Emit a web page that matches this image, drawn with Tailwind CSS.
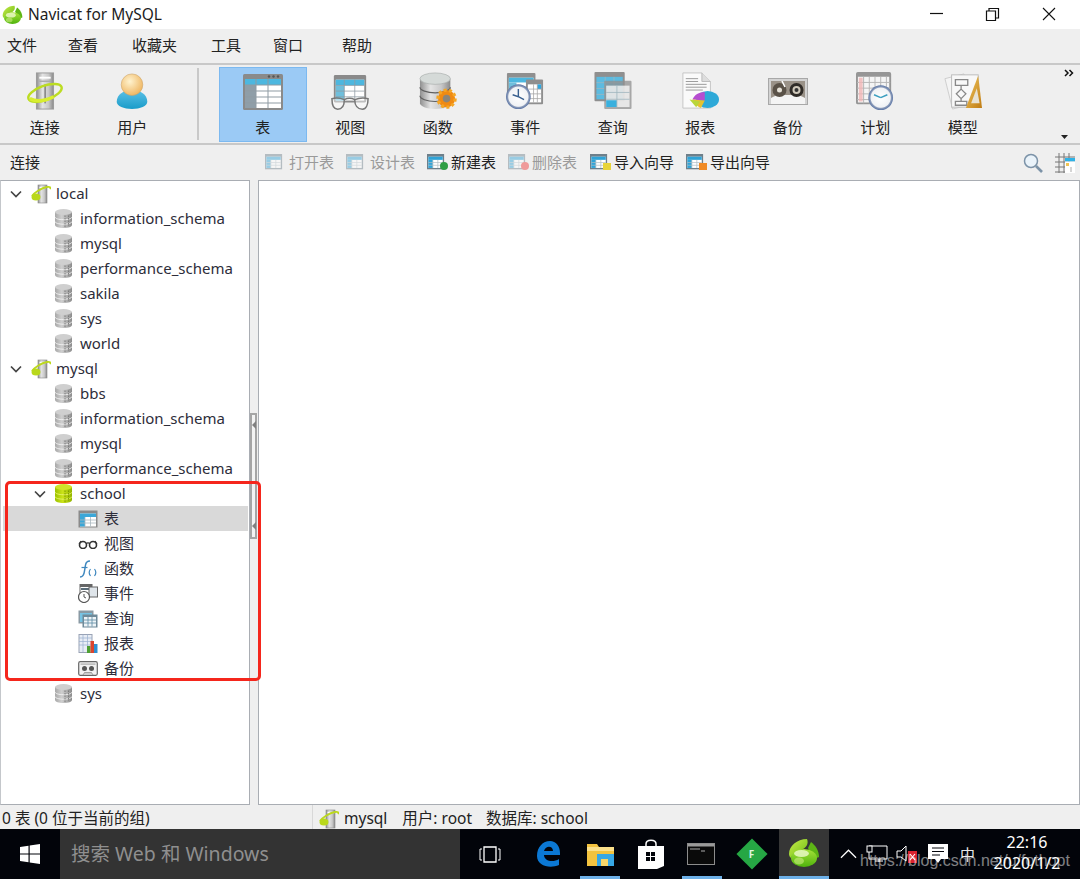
<!DOCTYPE html>
<html lang="zh">
<head>
<meta charset="utf-8">
<title>Navicat for MySQL</title>
<script src="https://cdn.jsdelivr.net/npm/@tailwindcss/browser@4"></script>
</head>
<body class="m-0">
<svg width="0" height="0" class="absolute">
  <defs>
    <linearGradient id="gMetal" x1="0" x2="1" y1="0" y2="0"><stop offset="0" stop-color="#8f8f8f"/><stop offset=".35" stop-color="#e4e4e4"/><stop offset=".7" stop-color="#c9c9c9"/><stop offset="1" stop-color="#8a8a8a"/></linearGradient>
    <linearGradient id="gDb" x1="0" x2="1" y1="0" y2="0"><stop offset="0" stop-color="#a8a8a8"/><stop offset=".4" stop-color="#cfcfcf"/><stop offset="1" stop-color="#8c8c8c"/></linearGradient>
    <linearGradient id="gBlue" x1="0" x2="0" y1="0" y2="1"><stop offset="0" stop-color="#5bc0e6"/><stop offset="1" stop-color="#1a9cc9"/></linearGradient>
    <linearGradient id="gLeaf" x1="0" x2="1" y1="0" y2="1"><stop offset="0" stop-color="#c9ec4a"/><stop offset="1" stop-color="#6cbc14"/></linearGradient>
    <linearGradient id="gBlob" x1="0" x2="0" y1="0" y2="1"><stop offset="0" stop-color="#a6e23a"/><stop offset="1" stop-color="#4fb30c"/></linearGradient>
    <linearGradient id="gLime" x1="0" x2="1" y1="0" y2="0"><stop offset="0" stop-color="#9cc200"/><stop offset=".45" stop-color="#cbe31a"/><stop offset="1" stop-color="#92b400"/></linearGradient>
    <radialGradient id="gFace" cx=".4" cy=".35" r=".7"><stop offset="0" stop-color="#fff3cf"/><stop offset="1" stop-color="#eeb35c"/></radialGradient>
    <radialGradient id="gClock" cx=".5" cy=".5" r=".5"><stop offset="0" stop-color="#fff"/><stop offset=".78" stop-color="#f0f2f5"/><stop offset=".86" stop-color="#8c9cba"/><stop offset="1" stop-color="#5b75a5"/></radialGradient>
    <linearGradient id="gGold" x1="0" x2="1" y1="0" y2="1"><stop offset="0" stop-color="#f0c860"/><stop offset="1" stop-color="#c07c14"/></linearGradient>

    <symbol id="logo" viewBox="0 0 32 29">
      <path d="M1 16C1 8 9 1 19 1c2 5-1 9-6 11-4 1.500-8 3-10 8-1-1-2-2-2-4z" fill="url(#gLeaf)"/>
      <path d="M23 4c4 3 8 8 8 15-1 1-3 1-5 0-3-3-5-6-6-9z" fill="#5db515"/>
      <ellipse cx="16" cy="20" rx="13" ry="9" fill="url(#gBlob)"/>
      <ellipse cx="13.500" cy="15.500" rx="7.500" ry="3.500" fill="#e9f8c4" opacity=".85"/>
      <ellipse cx="11" cy="23" rx="5" ry="3.500" fill="#d4f08a" opacity=".55"/>
    </symbol>
    <symbol id="conn" viewBox="0 0 40 40">
      <rect x="11" y="1" width="18" height="38" fill="url(#gMetal)" stroke="#9a9a9a"/>
      <rect x="14" y="5" width="12" height="2" fill="#fff"/><rect x="14" y="9" width="12" height="1.500" fill="#aaa"/>
      <rect x="19.500" y="13" width="1.200" height="20" fill="#666"/>
      <ellipse cx="20" cy="22" rx="18.500" ry="7.500" transform="rotate(-20 20 22)" fill="none" stroke="#bcdc22" stroke-width="2.600"/>
      <path d="M4 28c8 4 17 2 25-2" fill="none" stroke="#d9ee30" stroke-width="3.600"/>
    </symbol>
    <symbol id="user" viewBox="0 0 40 40">
      <path d="M3 32c0-8 8-13 17-13s17 5 17 13c0 5-8 8-17 8S3 37 3 32z" fill="url(#gBlue)"/>
      <circle cx="20" cy="13" r="12" fill="url(#gFace)" stroke="#c9a268" stroke-width=".6"/>
    </symbol>
    <symbol id="tbl" viewBox="0 0 40 36">
      <rect x="0" y="0" width="40" height="36" rx="1.500" fill="#8a8a8a"/>
      <rect x="2" y="5" width="36" height="29" fill="#fff"/>
      <rect x="2" y="5" width="36" height="6" fill="#4db7df"/>
      <rect x="2" y="11" width="11" height="23" fill="#8f9ea8"/>
      <path d="M2 11h36M2 17h36M2 23h36M2 29h36M13 5v29M25 5v29" stroke="#8f9ba3" stroke-width="1"/>
      <circle cx="26" cy="2.500" r="1.200" fill="#555"/><circle cx="30.500" cy="2.500" r="1.200" fill="#555"/><circle cx="35" cy="2.500" r="1.200" fill="#555"/>
    </symbol>
    <symbol id="view" viewBox="0 0 40 40">
      <rect x="3" y="1" width="34" height="29" rx="1.500" fill="#8a8a8a"/>
      <rect x="5" y="6" width="30" height="22" fill="#fff"/>
      <rect x="5" y="6" width="30" height="6" fill="#4db7df"/><rect x="5" y="12" width="9" height="16" fill="#6fbfdc"/>
      <path d="M5 12h30M5 18h30M5 24h30M14 6v22M25 6v22" stroke="#8f9ba3" stroke-width=".8"/>
      <path d="M1 26c4-1 8-1 13 1 0 6-2 10-7 10-5 0-6-6-6-11zM39 26c-4-1-9-1-14 1 0 6 3 10 8 10 4 0 6-5 6-11zM14 27c3-1.500 8-1.500 11 0" fill="#fff" fill-opacity=".45" stroke="#777" stroke-width="1.600"/>
    </symbol>
    <symbol id="func" viewBox="0 0 40 40">
      <path d="M1 7v26c0 3 7 6 16 6s16-3 16-6V7z" fill="url(#gMetal)"/>
      <ellipse cx="17" cy="7" rx="16" ry="6" fill="#d5dad8" stroke="#a0a5a3" stroke-width=".6"/>
      <path d="M1 16c0 3 7 6 16 6s16-3 16-6M1 25c0 3 7 6 16 6s16-3 16-6" fill="none" stroke="#606060" stroke-width="1.200"/>
      <circle cx="29" cy="28" r="9" fill="#f08a12"/>
      <circle cx="29" cy="28" r="9" fill="none" stroke="#f5a623" stroke-width="3.500" stroke-dasharray="3 2.600"/>
      <circle cx="29" cy="28" r="4" fill="#8c8578"/>
    </symbol>
    <symbol id="event" viewBox="0 0 40 40">
      <rect x="1" y="1" width="30" height="26" rx="1" fill="#8f8f8f"/><rect x="3" y="6" width="26" height="19" fill="#fff"/><rect x="3" y="6" width="26" height="5" fill="#4db7df"/>
      <rect x="3" y="11" width="8" height="14" fill="#6fbfdc"/>
      <rect x="21" y="8" width="18" height="26" rx="1" fill="#8f8f8f"/><rect x="23" y="13" width="14" height="19" fill="#fff"/><rect x="33" y="13" width="4" height="5" fill="#2fa7e0"/>
      <path d="M23 18h14M23 23h14M23 28h14M29 13v19M33 13v19" stroke="#a4a4a4" stroke-width=".8"/>
      <circle cx="13" cy="26" r="13" fill="url(#gClock)"/>
      <path d="M13 18v8l-6-2M13 26l6 3" fill="none" stroke="#39608f" stroke-width="1.500"/>
    </symbol>
    <symbol id="query" viewBox="0 0 40 40">
      <rect x="1" y="1" width="31" height="30" rx="1" fill="#8f8f8f"/><rect x="3" y="6" width="27" height="23" fill="#5cbbe0"/>
      <path d="M3 12h27M3 18h27M3 24h27M12 6v23M21 6v23" stroke="#9fb4bd" stroke-width=".8"/>
      <rect x="11" y="10" width="28" height="29" rx="1" fill="#8f8f8f" fill-opacity=".75"/><rect x="13" y="15" width="24" height="22" fill="#fff" fill-opacity=".72"/>
      <rect x="13" y="30" width="11" height="7" fill="#39b0de"/>
      <path d="M13 22h24M13 29h24M24 15v22" stroke="#9fb4bd" stroke-width=".8"/>
    </symbol>
    <symbol id="report" viewBox="0 0 40 40">
      <path d="M2 1h20l9 9v28H2z" fill="#fafafa" stroke="#c4c4c4"/>
      <path d="M22 1v9h9" fill="#ddd" stroke="#bbb"/>
      <path d="M5 7h13M5 10h13M5 13h22M5 16h22M5 19h18" stroke="#999" stroke-width="1"/>
      <ellipse cx="28" cy="29" rx="12" ry="9" fill="#2ea9d8"/>
      <path d="M25 21c-6 0-11 3-13 8l13 1z" fill="#b64dd0"/>
      <path d="M12 29c3 5 6 8 9 9l4-8z" fill="#e5c230"/>
      <path d="M9 29l11 2-4 6z" fill="#b9d63a"/>
    </symbol>
    <symbol id="backup" viewBox="0 0 40 27">
      <rect x=".5" y=".5" width="39" height="26" fill="#d3d3d3" stroke="#a8a8a8"/>
      <path d="M3 3h34v17H3z" fill="#9a9288"/>
      <path d="M3 20c4-2 8-4 11-3h12c3-1 7 1 11 3v6H3z" fill="#f4f4f4"/>
      <circle cx="11.500" cy="12" r="7" fill="#5a5248"/><circle cx="11.500" cy="12" r="2.500" fill="#e6e2d8"/>
      <path d="M14 3l3 6" stroke="#fff" stroke-width="1.500"/>
      <circle cx="28.500" cy="12" r="7" fill="#2f2b27"/><circle cx="28.500" cy="12" r="4" fill="#cfc8ba"/><circle cx="28.500" cy="12" r="2" fill="#333"/>
    </symbol>
    <symbol id="plan" viewBox="0 0 40 40">
      <rect x="1" y="1" width="35" height="32" rx="1" fill="#f5f5f5" stroke="#969696" stroke-width="2"/>
      <rect x="1" y="1" width="35" height="4" fill="#969696"/>
      <path d="M1 11h35M1 17h35M1 23h35M1 29h35M8 5v28M14 5v28M20 5v28M26 5v28M32 5v28" stroke="#b5b5b5" stroke-width="1"/>
      <rect x="3" y="6" width="4" height="25" fill="#f1b5b5" opacity=".8"/>
      <circle cx="26" cy="27" r="13" fill="url(#gClock)"/>
      <path d="M26 27l-7-3M26 27l7-3" fill="none" stroke="#3c9fc0" stroke-width="1.600"/>
    </symbol>
    <symbol id="model" viewBox="0 0 40 40">
      <path d="M1 7l20-5 8 32-20 5z" fill="#f4f4f4" stroke="#ccc"/>
      <rect x="8" y="3" width="28" height="34" fill="#f8f8f8" stroke="#bbb"/>
      <path d="M12 8h13v6H12zM18 14v4M18 18l5 5-5 5-5-5zM18 28v3M12 31h12v4H12z" fill="none" stroke="#888" stroke-width="1.400"/>
      <path d="M36 4L23 38h17z" fill="url(#gGold)"/>
      <path d="M34.500 17l-6 16h9z" fill="#e8e2d2"/>
    </symbol>
    <symbol id="db" viewBox="0 0 17 19">
      <path d="M0 3v13c0 1.700 3.800 3 8.500 3s8.500-1.300 8.500-3V3z" fill="url(#gDb)"/>
      <ellipse cx="8.500" cy="3" rx="8.500" ry="3" fill="#cfcfcf"/>
      <path d="M0 8c0 1.500 3.800 2.700 8.500 2.700S17 9.500 17 8M0 12.500c0 1.500 3.800 2.700 8.500 2.700s8.500-1.200 8.500-2.700" fill="none" stroke="#f0f0f0" stroke-width="1"/>
      <path d="M10 6.500v11.500M13.500 6.500V17" stroke="#777" stroke-width=".9" stroke-dasharray="1.500 1"/>
    </symbol>
    <symbol id="dbOn" viewBox="0 0 17 19">
      <path d="M0 3v13c0 1.700 3.800 3 8.500 3s8.500-1.300 8.500-3V3z" fill="url(#gLime)"/>
      <ellipse cx="8.500" cy="3" rx="8.500" ry="3" fill="#cfe42a"/>
      <path d="M0 8c0 1.500 3.800 2.700 8.500 2.700S17 9.500 17 8M0 12.500c0 1.500 3.800 2.700 8.500 2.700s8.500-1.200 8.500-2.700" fill="none" stroke="#e6f36a" stroke-width="1"/>
      <path d="M10 6.500v11.500M13.500 6.500V17" stroke="#7c9400" stroke-width=".9" stroke-dasharray="1.500 1"/>
    </symbol>
    <symbol id="connS" viewBox="0 0 20 20">
      <rect x="7" y="1" width="9" height="18" fill="url(#gMetal)" stroke="#888" stroke-width=".6"/>
      <rect x="8.500" y="3" width="6" height="1.200" fill="#fff"/>
      <path d="M1 12c2-3 9-8 15-9 3-.5 4 .5 3 2" fill="none" stroke="#bcd81e" stroke-width="1.800"/>
      <ellipse cx="5" cy="13" rx="4.500" ry="3.500" fill="#b9d81c"/>
    </symbol>
    <symbol id="chev" viewBox="0 0 12 8"><path d="M1 1.500l5 5 5-5" fill="none" stroke="#444" stroke-width="1.700"/></symbol>
    <symbol id="sTbl" viewBox="0 0 20 18">
      <rect x=".5" y=".5" width="19" height="17" fill="#8a8a8a"/>
      <rect x="2" y="3.500" width="16" height="13" fill="#fff"/>
      <rect x="2" y="3.500" width="16" height="3.500" fill="#3aa7d8"/><rect x="2" y="7" width="5" height="9.500" fill="#3aa7d8"/>
      <path d="M2 10h16M2 13h16M7 7v9.500M12.500 7v9.500" stroke="#a9b7bf" stroke-width=".8"/>
    </symbol>
    <symbol id="sGlass" viewBox="0 0 20 10"><circle cx="5" cy="6" r="3.500" fill="none" stroke="#333" stroke-width="1.600"/><circle cx="15" cy="6" r="3.500" fill="none" stroke="#333" stroke-width="1.600"/><path d="M8 4.500c1.500-1 2.500-1 4 0M1 5l2-3M19 5l-2-3" fill="none" stroke="#333" stroke-width="1.200"/></symbol>
    <symbol id="sFunc" viewBox="0 0 20 18"><path d="M2 17c3 0 4-2 4.500-6l1-6c.4-2.500 2-4 4.500-4" fill="none" stroke="#3f88bf" stroke-width="1.500"/><path d="M3.500 7.500h6" stroke="#3f88bf" stroke-width="1.200"/><path d="M12.500 9c-1.500 2-1.500 5 0 7M16.500 9c1.500 2 1.500 5 0 7" fill="none" stroke="#3f88bf" stroke-width="1.200"/></symbol>
    <symbol id="sEvent" viewBox="0 0 20 19">
      <rect x="2" y=".5" width="12" height="12" fill="#fff" stroke="#666"/><rect x="2" y=".5" width="12" height="2.500" fill="#666"/><rect x="3" y="4" width="10" height="2" fill="#5a6d7a"/>
      <rect x="11" y="3" width="8.500" height="10" fill="#dfe5ea" stroke="#666"/>
      <circle cx="6" cy="13" r="5.500" fill="#fff" stroke="#555" stroke-width="1.200"/><path d="M6 10v3l2 1" fill="none" stroke="#555"/>
    </symbol>
    <symbol id="sQuery" viewBox="0 0 20 18">
      <rect x=".5" y=".5" width="15" height="13" fill="#8a9aa4"/><rect x="2" y="3" width="12" height="9" fill="#76c3e3"/>
      <rect x="4.500" y="4.500" width="15" height="13" fill="#6f8a99"/><rect x="6" y="7" width="12" height="9.500" fill="#eef4f7"/>
      <path d="M6 10h12M6 13h12M10 7v9.500M14 7v9.500" stroke="#5b8aa3" stroke-width=".8"/>
    </symbol>
    <symbol id="sReport" viewBox="0 0 20 19">
      <rect x="1" y=".5" width="13" height="18" fill="#e8edf5" stroke="#9aa3b5"/>
      <path d="M1 4h13M1 7.500h13M1 11h13M5 .5v18M9.500 .5v18" stroke="#9ab0d0" stroke-width=".7"/>
      <rect x="9" y="12" width="3.500" height="7" fill="#4da032"/><rect x="12.500" y="7" width="3.500" height="12" fill="#d9442e"/><rect x="16" y="10" width="3.500" height="9" fill="#2e8fd0"/>
    </symbol>
    <symbol id="sBackup" viewBox="0 0 20 15"><rect x=".7" y=".7" width="18.600" height="13.600" rx="1.500" fill="#f1f1f1" stroke="#666" stroke-width="1.200"/><circle cx="6.500" cy="7.500" r="2.500" fill="#555"/><circle cx="13.500" cy="7.500" r="2.500" fill="#555"/><rect x="2.500" y="2.500" width="15" height="1.200" fill="#aaa"/><path d="M5 14l1.500-2.500h7L15 14" fill="#ccc" stroke="#777" stroke-width=".6"/></symbol>
    <symbol id="aWin" viewBox="0 0 20 20">
      <rect x="0" y="0" width="19" height="17" fill="#6e7f8a"/><rect x="1.500" y="3" width="16" height="12.500" fill="#fff"/>
      <rect x="1.500" y="3" width="16" height="3.500" fill="#2fa3d7"/><rect x="1.500" y="6.500" width="5" height="9" fill="#2fa3d7"/>
      <path d="M1.500 9.500h16M1.500 12.500h16M6.500 6.500v9M12 6.500v9" stroke="#b0bec5" stroke-width=".8"/>
    </symbol>
  </defs>
</svg>

<div class="relative w-[1080px] h-[879px] overflow-hidden flex flex-col bg-[#efefef] text-[#222] font-['Noto_Sans','Noto_Sans_CJK_SC',sans-serif]">

  <!-- title bar -->
  <header class="h-[29px] bg-white flex items-center shrink-0">
    <svg class="w-[21px] h-[19px] ml-[2px]"><use href="#logo"/></svg>
    <span class="ml-[5px] text-[15.5px] text-[#1d1d1d]">Navicat for MySQL</span>
    <div class="ml-auto flex items-center h-full">
      <svg class="w-[57px] h-[15px]" viewBox="0 0 57 15"><path d="M23 6.500h13" stroke="#111" stroke-width="1.200" fill="none"/></svg>
      <svg class="w-[57px] h-[15px]" viewBox="0 0 57 15"><path d="M22.500 4h9v9.500h-9zM25 4V1.500h9.500V11h-3" fill="none" stroke="#111" stroke-width="1.200"/></svg>
      <svg class="w-[57px] h-[15px] mr-[2px]" viewBox="0 0 57 15"><path d="M22 1l12 12M34 1L22 13" fill="none" stroke="#111" stroke-width="1.100"/></svg>
    </div>
  </header>

  <!-- menu -->
  <nav class="h-[36px] shrink-0 flex items-center text-[15px] pl-[7px] pb-[2px] border-b-2 border-[#c8c8c8]">
    <span class="w-[61px]">文件</span><span class="w-[64px]">查看</span><span class="w-[79px]">收藏夹</span><span class="w-[62px]">工具</span><span class="w-[69px]">窗口</span><span>帮助</span>
  </nav>

  <!-- main toolbar -->
  <div class="relative h-[80px] shrink-0 flex items-start pl-[1px] pt-[2px] border-b-2 border-[#c8c8c8] text-[15px]">
    <div class="w-[87.5px] h-[75px] flex flex-col items-center justify-between pt-[5px] pb-[5px]"><svg class="w-[40px] h-[38px]"><use href="#conn"/></svg><span class="leading-[20px]">连接</span></div>
    <div class="w-[87.5px] h-[75px] flex flex-col items-center justify-between pt-[5px] pb-[5px]"><svg class="w-[36px] h-[38px]"><use href="#user"/></svg><span class="leading-[20px]">用户</span></div>
    <div class="w-[2px] h-[72px] bg-[#c9c9c9] ml-[21px] mr-[20px] mt-[1px]"></div>
    <div class="w-[87.5px] h-[75px] flex flex-col items-center justify-between pt-[6px] pb-[4px] bg-[#9bcaf5] border border-[#7cb9f0]"><svg class="w-[40px] h-[36px]"><use href="#tbl"/></svg><span class="leading-[20px]">表</span></div>
    <div class="w-[87.5px] h-[75px] flex flex-col items-center justify-between pt-[7px] pb-[5px]"><svg class="w-[40px] h-[38px]"><use href="#view"/></svg><span class="leading-[20px]">视图</span></div>
    <div class="w-[87.5px] h-[75px] flex flex-col items-center justify-between pt-[5px] pb-[5px]"><svg class="w-[40px] h-[38px]"><use href="#func"/></svg><span class="leading-[20px]">函数</span></div>
    <div class="w-[87.5px] h-[75px] flex flex-col items-center justify-between pt-[5px] pb-[5px]"><svg class="w-[40px] h-[38px]"><use href="#event"/></svg><span class="leading-[20px]">事件</span></div>
    <div class="w-[87.5px] h-[75px] flex flex-col items-center justify-between pt-[4px] pb-[5px]"><svg class="w-[40px] h-[39px]"><use href="#query"/></svg><span class="leading-[20px]">查询</span></div>
    <div class="w-[87.5px] h-[75px] flex flex-col items-center justify-between pt-[5px] pb-[5px]"><svg class="w-[40px] h-[38px]"><use href="#report"/></svg><span class="leading-[20px]">报表</span></div>
    <div class="w-[87.5px] h-[75px] flex flex-col items-center justify-between pt-[11px] pb-[5px]"><svg class="w-[40px] h-[27px]"><use href="#backup"/></svg><span class="leading-[20px]">备份</span></div>
    <div class="w-[87.5px] h-[75px] flex flex-col items-center justify-between pt-[5px] pb-[5px]"><svg class="w-[40px] h-[38px]"><use href="#plan"/></svg><span class="leading-[20px]">计划</span></div>
    <div class="w-[87.5px] h-[75px] flex flex-col items-center justify-between pt-[5px] pb-[5px]"><svg class="w-[40px] h-[38px]"><use href="#model"/></svg><span class="leading-[20px]">模型</span></div>
    <svg class="absolute right-[6px] top-[4px] w-[10px] h-[8px]" viewBox="0 0 10 8"><path d="M1 1l3 3-3 3M5.500 1l3 3-3 3" fill="none" stroke="#111" stroke-width="1.500"/></svg>
    <svg class="absolute right-[12px] bottom-[4px] w-[7px] h-[4px]" viewBox="0 0 7 4"><path d="M0 0h7L3.500 4z" fill="#222"/></svg>
  </div>

  <!-- object toolbar -->
  <div class="h-[35px] shrink-0 flex items-center text-[15px] pl-[10px] pr-[5px]">
    <span class="w-[254px]">连接</span>
    <div class="flex items-center text-[#9a9a9a] w-[81px] gap-[5px]"><svg class="w-[20px] h-[18px] opacity-45"><use href="#aWin"/></svg><span>打开表</span></div>
    <div class="flex items-center text-[#9a9a9a] w-[81px] gap-[5px]"><svg class="w-[20px] h-[18px] opacity-45"><use href="#aWin"/></svg><span>设计表</span></div>
    <div class="relative flex items-center w-[81px] gap-[5px]"><svg class="w-[20px] h-[18px]"><use href="#aWin"/></svg><span class="absolute left-[14px] top-[11px] w-[8px] h-[8px] rounded-full bg-[#2f9e44]"></span><span>新建表</span></div>
    <div class="relative flex items-center text-[#9a9a9a] w-[82px] gap-[5px]"><svg class="w-[20px] h-[18px] opacity-45"><use href="#aWin"/></svg><span class="absolute left-[14px] top-[11px] w-[8px] h-[8px] rounded-full bg-[#ef9a9a]"></span><span>删除表</span></div>
    <div class="relative flex items-center w-[96px] gap-[5px]"><svg class="w-[20px] h-[18px]"><use href="#aWin"/></svg><span class="absolute left-[14px] top-[12px] w-[8px] h-[7px] bg-[#e8d43a]"></span><span>导入向导</span></div>
    <div class="relative flex items-center gap-[5px]"><svg class="w-[20px] h-[18px]"><use href="#aWin"/></svg><span class="absolute left-[14px] top-[12px] w-[8px] h-[7px] bg-[#f08a24]"></span><span>导出向导</span></div>
    <svg class="w-[20px] h-[20px] ml-auto" viewBox="0 0 20 20"><circle cx="8" cy="8" r="6.500" fill="#eaf3fa" stroke="#7c93a8" stroke-width="1.500"/><path d="M13 13l6 6" stroke="#7c93a8" stroke-width="2.600"/></svg>
    <svg class="w-[20px] h-[20px] ml-[12px]" viewBox="0 0 20 20"><path d="M0 4h20M0 9h20M0 14h20M0 19h20M4 0v20M9 0v20M14 0v20" stroke="#777" stroke-width="1"/><rect x="10" y="5" width="10" height="3.500" fill="#2eb2e6"/><rect x="10" y="8.500" width="10" height="11.500" fill="#fff"/><rect x="11" y="10" width="3" height="3" fill="#f1c453"/><path d="M16 14v5" stroke="#aaa"/></svg>
  </div>

  <!-- panes -->
  <div class="h-[625px] shrink-0 flex">
    <aside class="w-[250px] border border-[#a9adb3] border-l-[#c4c7cb] bg-white text-[15px] text-[#2d2d3a] pl-[2px] overflow-hidden">
      <div class="h-[25px] flex items-center"><svg class="w-[12px] h-[8px] ml-[7px]"><use href="#chev"/></svg><svg class="w-[20px] h-[20px] ml-[9px]"><use href="#connS"/></svg><span class="ml-[5px]">local</span></div>
      <div class="h-[25px] flex items-center"><svg class="w-[17px] h-[19px] ml-[52px]"><use href="#db"/></svg><span class="ml-[8px]">information_schema</span></div>
      <div class="h-[25px] flex items-center"><svg class="w-[17px] h-[19px] ml-[52px]"><use href="#db"/></svg><span class="ml-[8px]">mysql</span></div>
      <div class="h-[25px] flex items-center"><svg class="w-[17px] h-[19px] ml-[52px]"><use href="#db"/></svg><span class="ml-[8px]">performance_schema</span></div>
      <div class="h-[25px] flex items-center"><svg class="w-[17px] h-[19px] ml-[52px]"><use href="#db"/></svg><span class="ml-[8px]">sakila</span></div>
      <div class="h-[25px] flex items-center"><svg class="w-[17px] h-[19px] ml-[52px]"><use href="#db"/></svg><span class="ml-[8px]">sys</span></div>
      <div class="h-[25px] flex items-center"><svg class="w-[17px] h-[19px] ml-[52px]"><use href="#db"/></svg><span class="ml-[8px]">world</span></div>
      <div class="h-[25px] flex items-center"><svg class="w-[12px] h-[8px] ml-[7px]"><use href="#chev"/></svg><svg class="w-[20px] h-[20px] ml-[9px]"><use href="#connS"/></svg><span class="ml-[5px]">mysql</span></div>
      <div class="h-[25px] flex items-center"><svg class="w-[17px] h-[19px] ml-[52px]"><use href="#db"/></svg><span class="ml-[8px]">bbs</span></div>
      <div class="h-[25px] flex items-center"><svg class="w-[17px] h-[19px] ml-[52px]"><use href="#db"/></svg><span class="ml-[8px]">information_schema</span></div>
      <div class="h-[25px] flex items-center"><svg class="w-[17px] h-[19px] ml-[52px]"><use href="#db"/></svg><span class="ml-[8px]">mysql</span></div>
      <div class="h-[25px] flex items-center"><svg class="w-[17px] h-[19px] ml-[52px]"><use href="#db"/></svg><span class="ml-[8px]">performance_schema</span></div>
      <div class="h-[25px] flex items-center"><svg class="w-[12px] h-[8px] ml-[31px]"><use href="#chev"/></svg><svg class="w-[17px] h-[19px] ml-[9px]"><use href="#dbOn"/></svg><span class="ml-[8px]">school</span></div>
      <div class="h-[25px] flex items-center bg-[#d9d9d9] mr-[1px]"><svg class="w-[20px] h-[18px] ml-[75px]"><use href="#sTbl"/></svg><span class="ml-[6px]">表</span></div>
      <div class="h-[25px] flex items-center"><svg class="w-[20px] h-[10px] ml-[75px]"><use href="#sGlass"/></svg><span class="ml-[6px]">视图</span></div>
      <div class="h-[25px] flex items-center"><svg class="w-[20px] h-[18px] ml-[75px]"><use href="#sFunc"/></svg><span class="ml-[6px]">函数</span></div>
      <div class="h-[25px] flex items-center"><svg class="w-[20px] h-[19px] ml-[75px]"><use href="#sEvent"/></svg><span class="ml-[6px]">事件</span></div>
      <div class="h-[25px] flex items-center"><svg class="w-[20px] h-[18px] ml-[75px]"><use href="#sQuery"/></svg><span class="ml-[6px]">查询</span></div>
      <div class="h-[25px] flex items-center"><svg class="w-[20px] h-[19px] ml-[75px]"><use href="#sReport"/></svg><span class="ml-[6px]">报表</span></div>
      <div class="h-[25px] flex items-center"><svg class="w-[20px] h-[15px] ml-[75px]"><use href="#sBackup"/></svg><span class="ml-[6px]">备份</span></div>
      <div class="h-[25px] flex items-center"><svg class="w-[17px] h-[19px] ml-[52px]"><use href="#db"/></svg><span class="ml-[8px]">sys</span></div>
    </aside>
    <div class="relative w-[8px] shrink-0">
      <div class="absolute left-[0px] top-[233px] w-[7px] h-[126px] border-2 border-[#a5a5a5] bg-[#f3f3f3]"></div>
      <svg class="absolute left-[2px] top-[241px] w-[4px] h-[8px]" viewBox="0 0 4 8"><path d="M4 0v8L0 4z" fill="#808080"/></svg>
      <svg class="absolute left-[2px] top-[342px] w-[4px] h-[8px]" viewBox="0 0 4 8"><path d="M4 0v8L0 4z" fill="#808080"/></svg>
    </div>
    <main class="flex-1 border border-[#a9adb3] bg-white"></main>
  </div>

  <!-- status bar -->
  <footer class="h-[24px] shrink-0 flex items-center text-[15.5px] text-[#222]">
    <span class="w-[312px] pl-[2px] pt-[4px]">0 表 (0 位于当前的组)</span>
    <div class="h-full flex items-center border-l border-[#d8d8d8] pl-[6px]">
      <svg class="w-[20px] h-[20px] mt-[3px]"><use href="#connS"/></svg>
      <span class="ml-[5px] pt-[4px]">mysql</span><span class="ml-[15px] pt-[4px]">用户: root</span><span class="ml-[14px] pt-[4px]">数据库: school</span>
    </div>
  </footer>

  <!-- taskbar -->
  <div class="h-[50px] shrink-0 flex items-center bg-[#02040a] text-white relative">
    <div class="w-[60px] flex justify-center"><svg class="w-[20px] h-[20px]" viewBox="0 0 20 20"><path d="M0 3l8.500-1.200V9.500H0zM9.700 1.600L20 0v9.500H9.700zM0 10.500h8.500v7.700L0 17zM9.700 10.500H20V20L9.700 18.400z" fill="#fff"/></svg></div>
    <div class="w-[400px] h-full bg-[#333333] flex items-center pl-[11px] text-[19.500px] text-[#8f8f8f]">搜索 Web 和 Windows</div>
    <div class="w-[60px] flex justify-center"><svg class="w-[22px] h-[17px]" viewBox="0 0 22 17"><path d="M5 1h12v15H5z" fill="none" stroke="#fff" stroke-width="1.300"/><path d="M3 3H1v11h2M19 3h2v11h-2" fill="none" stroke="#fff" stroke-width="1"/></svg></div>
    <div class="w-[56px] flex justify-center"><svg class="w-[25px] h-[26px]" viewBox="0 0 25 26"><path d="M1 15C1 6 7 0 14 0c6 0 10 5 10 12v2H8c0 6 9 8 15 4v6c-9 4-22 1-22-9zM8 10h9c0-5-7-6-9 0z" fill="#0b78d4"/></svg></div>
    <div class="w-[48px] h-full flex items-center justify-center relative"><svg class="w-[27px] h-[24px]" viewBox="0 0 27 24"><path d="M0 2h10l2 3h15v19H0z" fill="#f3c33f"/><path d="M0 5h27v4H0z" fill="#fbe08a"/><rect x="10" y="12" width="17" height="12" fill="#37a8e6"/><rect x="14" y="17" width="7" height="7" fill="#f6d66a"/></svg><span class="absolute left-[4px] right-[4px] bottom-0 h-[3px] bg-[#6db0e8]"></span></div>
    <div class="w-[54px] flex justify-center"><svg class="w-[26px] h-[30px]" viewBox="0 0 26 30"><path d="M8 8V5c0-5 10-5 10 0v3" fill="none" stroke="#fff" stroke-width="1.500"/><path d="M0 7h26v20l-7 3H0z" fill="#fff"/><path d="M8 13h4v4H8zM13 13h4v4h-4zM8 18h4v4H8zM13 18h4v4h-4z" fill="#02040a"/></svg></div>
    <div class="w-[46px] h-full flex items-center justify-center relative"><svg class="w-[28px] h-[22px]" viewBox="0 0 28 22"><rect x=".5" y=".5" width="27" height="21" fill="#0a0a0a" stroke="#8c8c8c"/><rect x="1" y="1" width="26" height="2.500" fill="#9a9a9a"/><path d="M3 6h10M14 8h4" stroke="#aaa"/></svg><span class="absolute left-[4px] right-[2px] bottom-0 h-[3px] bg-[#6db0e8]"></span></div>
    <div class="w-[55px] flex justify-center"><div class="relative w-[31px] h-[31px] flex items-center justify-center"><div class="absolute w-[22px] h-[22px] rotate-45 bg-[#26a744]"></div><span class="relative text-[10px] font-bold leading-none text-[#dff5e2]">F</span></div></div>
    <div class="w-[50px] h-full bg-[#363636] flex items-center justify-center border-b-[3px] border-[#6db0e8]"><svg class="w-[32px] h-[29px]"><use href="#logo"/></svg></div>
    <div class="flex items-center ml-[11px]">
      <svg class="w-[17px] h-[10px]" viewBox="0 0 18 10"><path d="M1 9l8-8 8 8" fill="none" stroke="#fff" stroke-width="1.300"/></svg>
      <svg class="w-[22px] h-[18px] ml-[9px]" viewBox="0 0 22 18"><path d="M3 1h18v13H3zM9 16h8M13 14v3" fill="none" stroke="#fff"/><rect x="1" y="1" width="5" height="6" fill="#02040a" stroke="#fff"/></svg>
      <svg class="w-[24px] h-[20px] ml-[8px]" viewBox="0 0 24 20"><path d="M1 7h4l5-5v15l-5-4H1z" fill="none" stroke="#fff"/><rect x="12" y="7" width="9" height="12" fill="#d9232e"/><path d="M14 10l5 6M19 10l-5 6" stroke="#fff" stroke-width="1.100"/></svg>
      <svg class="w-[20px] h-[20px] ml-[8px]" viewBox="0 0 20 20"><path d="M0 0h20v15h-7l-3 4-3-4H0z" fill="#fff"/><path d="M4 4h12M4 7.500h12M4 11h8" stroke="#02040a" stroke-width="1.200"/></svg>
      <span class="ml-[12px] text-[15px] leading-none text-[#e8e8e8]">中</span>
    </div>
    <div class="absolute left-[980px] w-[94px] top-[3px] flex flex-col items-center text-[16px] leading-[21px] text-white"><span>22:16</span><span>2020/1/2</span></div>
    <span class="absolute left-[860px] top-[22px] text-[16px] leading-[20px] text-white/50 font-['Liberation_Sans',sans-serif] whitespace-nowrap">https://blog.csdn.net/u/fothopt</span>
  </div>

  <!-- red annotation box drawn over the tree -->
  <div class="absolute left-[5px] top-[481px] w-[256px] h-[200px] border-[3px] border-[#f5261c] rounded-[5px]"></div>
</div>
</body>
</html>
